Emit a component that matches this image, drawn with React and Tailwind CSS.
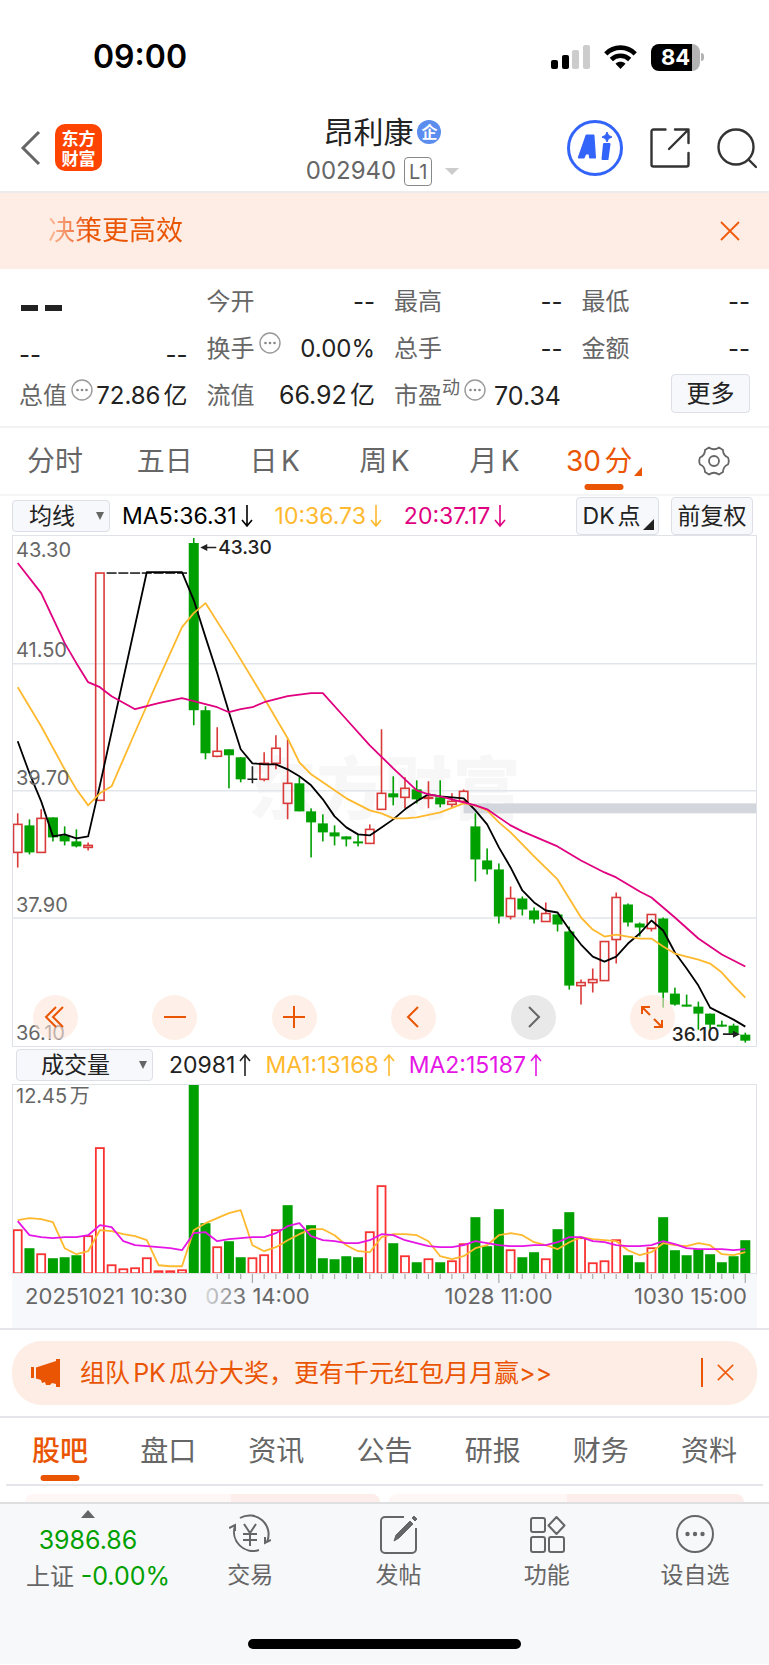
import { useState } from 'react';

const UP = '#d93a3a';
const DOWN = '#00a000';

// [kind, high, bodyTop, bodyBottom, low, volumeTop]
// u = up, d = down, x = flat, h = halted at the limit price
const bars = [
  ['u', 813, 824, 852, 867, 1229],
  ['d', 819, 825, 852, 854, 1248],
  ['u', 809, 818, 852, 852, 1253],
  ['d', 817, 817, 837, 841, 1258],
  ['d', 826, 835, 841, 845, 1257],
  ['d', 829, 841, 846, 847, 1255],
  ['u', 842, 845, 847, 850, 1235],
  ['u', 573, 573, 800, 800, 1147],
  ['h', 573, 573, 573, 573, 1264],
  ['h', 573, 573, 573, 573, 1268],
  ['h', 573, 573, 573, 573, 1267],
  ['h', 573, 573, 573, 573, 1257],
  ['h', 573, 573, 573, 573, 1270],
  ['h', 573, 573, 573, 573, 1270],
  ['h', 573, 573, 573, 573, 1269],
  ['d', 538, 543, 710, 725, 1084],
  ['d', 706, 710, 753, 759, 1223],
  ['u', 727, 751, 756, 757, 1246],
  ['d', 749, 749, 755, 788, 1241],
  ['d', 757, 757, 779, 782, 1257],
  ['x', 766, 779, 779, 783, 1257],
  ['u', 752, 763, 779, 781, 1254],
  ['u', 735, 748, 763, 769, 1229],
  ['u', 739, 783, 803, 819, 1205],
  ['d', 777, 783, 811, 811, 1229],
  ['d', 808, 811, 822, 857, 1225],
  ['d', 814, 823, 832, 841, 1258],
  ['d', 825, 832, 836, 845, 1259],
  ['d', 836, 836, 839, 846, 1256],
  ['d', 834, 841, 843, 846, 1257],
  ['u', 824, 829, 843, 843, 1231],
  ['u', 729, 793, 809, 809, 1185],
  ['d', 776, 793, 797, 805, 1243],
  ['u', 777, 788, 797, 808, 1255],
  ['d', 780, 789, 799, 803, 1262],
  ['u', 781, 797, 798, 808, 1258],
  ['d', 780, 797, 804, 807, 1262],
  ['u', 793, 801, 804, 807, 1260],
  ['u', 789, 791, 801, 801, 1243],
  ['d', 813, 826, 859, 881, 1217],
  ['d', 848, 860, 869, 874, 1246],
  ['d', 863, 869, 916, 923, 1209],
  ['u', 886, 898, 916, 919, 1249],
  ['d', 896, 898, 909, 915, 1257],
  ['d', 907, 910, 919, 923, 1252],
  ['u', 902, 913, 921, 921, 1258],
  ['d', 914, 914, 924, 931, 1229],
  ['d', 926, 931, 985, 989, 1212],
  ['u', 979, 982, 985, 1004, 1237],
  ['u', 968, 979, 982, 992, 1262],
  ['u', 941, 941, 980, 980, 1260],
  ['u', 892, 897, 939, 963, 1239],
  ['d', 903, 904, 922, 926, 1255],
  ['d', 922, 923, 927, 936, 1262],
  ['u', 914, 914, 928, 931, 1247],
  ['d', 917, 918, 992, 1007, 1217],
  ['d', 987, 993, 1004, 1005, 1250],
  ['d', 994, 1004, 1005, 1006, 1255],
  ['d', 1001, 1006, 1013, 1029, 1249],
  ['d', 1013, 1013, 1024, 1028, 1254],
  ['d', 1020, 1024, 1025, 1026, 1262],
  ['d', 1023, 1025, 1033, 1033, 1256],
  ['d', 1032, 1034, 1040, 1042, 1240],
];

const ma5 = [[0, 741], [1, 773], [2, 801], [3, 836], [4, 834], [5, 838], [6, 836], [7, 785], [11, 572], [14, 572], [15, 600], [16, 637], [17, 673], [18, 712], [19, 749], [20, 763], [21, 764], [22, 764], [23, 769], [24, 776], [25, 785], [26, 799], [27, 816], [28, 827], [29, 834], [30, 835], [31, 827], [32, 819], [33, 809], [34, 801], [35, 794], [36, 796], [37, 797], [38, 798], [39, 810], [40, 824], [41, 847], [42, 867], [43, 890], [44, 902], [45, 910], [46, 912], [47, 929], [48, 944], [49, 956], [50, 961], [51, 956], [52, 943], [53, 933], [54, 920], [55, 930], [56, 952], [57, 968], [58, 985], [59, 1007], [60, 1013], [61, 1019], [62, 1026]];
const ma10 = [[0, 687], [2, 726], [4, 769], [5, 789], [6, 805], [7, 793], [8, 786], [10, 732], [12, 679], [14, 627], [15, 613], [16, 603], [18, 640], [21, 698], [22, 718], [23, 738], [24, 762], [25, 774], [26, 782], [28, 798], [30, 810], [31, 813], [32, 818], [33, 818], [34, 817], [36, 812], [38, 803], [39, 805], [40, 810], [41, 822], [42, 832], [44, 856], [46, 879], [48, 917], [49, 929], [50, 936], [51, 934], [52, 936], [53, 938], [54, 938], [55, 946], [56, 953], [57, 956], [58, 959], [59, 963], [60, 972], [61, 985], [62, 997]];
const ma20 = [[0, 563], [2, 593], [3, 618], [4, 643], [5, 663], [6, 682], [7, 687], [8, 696], [10, 709], [12, 703], [14, 698], [15, 701], [16, 704], [17, 707], [18, 712], [19, 709], [20, 707], [21, 702], [22, 699], [23, 696], [25, 693], [26, 693], [28, 719], [30, 745], [32, 768], [34, 790], [35, 794], [36, 796], [37, 799], [38, 802], [39, 805], [40, 809], [41, 817], [42, 825], [43, 831], [44, 836], [46, 846], [48, 860], [50, 872], [51, 877], [53, 891], [54, 897], [56, 917], [58, 938], [60, 954], [61, 960], [62, 966]];
const volMa1 = [1220, 1218, 1219, 1222, 1248, 1254, 1251, 1230, 1231, 1234, 1236, 1240, 1265, 1266, 1266, 1230, 1223, 1218, 1213, 1210, 1245, 1251, 1247, 1240, 1234, 1229, 1229, 1235, 1245, 1251, 1252, 1237, 1234, 1234, 1235, 1241, 1256, 1259, 1256, 1248, 1245, 1235, 1233, 1235, 1242, 1245, 1249, 1242, 1237, 1239, 1240, 1241, 1250, 1255, 1252, 1243, 1245, 1246, 1243, 1245, 1254, 1255, 1252].map((y, i) => [i, y]);
const volMa2 = [1221, 1235, 1237, 1238, 1237, 1237, 1235, 1225, 1227, 1241, 1245, 1246, 1247, 1248, 1250, 1233, 1232, 1241, 1239, 1238, 1237, 1237, 1233, 1226, 1223, 1236, 1240, 1241, 1243, 1243, 1240, 1234, 1235, 1240, 1243, 1246, 1247, 1247, 1245, 1241, 1243, 1245, 1246, 1246, 1245, 1245, 1242, 1237, 1237, 1241, 1242, 1245, 1246, 1246, 1245, 1241, 1244, 1248, 1249, 1249, 1249, 1250, 1249].map((y, i) => [i, y]);

const barX = (i) => 5.7 + i * 11.72;
const toPoints = (data) => data.map(([i, y]) => `${barX(i)},${y}`).join(' ');

function Candle({ index, bar }) {
  const [kind, high, top, bottom, low] = bar;
  const x = barX(index);
  if (kind === 'h') {
    return <path d={`M${x - 5} ${top}h10`} stroke="#222" strokeWidth="1.6" />;
  }
  if (kind === 'x') {
    return <path d={`M${x - 5} ${top}h10M${x} ${high}V${low}`} stroke="#222" strokeWidth="1.6" />;
  }
  if (kind === 'd') {
    return (
      <g fill={DOWN}>
        <rect x={x - 5} y={top} width="10" height={Math.max(bottom - top, 2)} />
        <rect x={x - 0.8} y={high} width="1.6" height={low - high} />
      </g>
    );
  }
  return (
    <g stroke={UP} strokeWidth="1.6" fill="none">
      <rect x={x - 4.2} y={top} width="8.4" height={bottom - top} />
      <path d={`M${x} ${high}V${top}M${x} ${bottom}V${low}`} />
    </g>
  );
}

function PriceChart() {
  return (
    <svg viewBox="0 535 744 511" className="block h-auto w-full" fontFamily="Inter, 'Noto Sans CJK SC', sans-serif">
      <text x="236" y="814" fontSize="68" fontWeight="900" fill="#f7f7f7">东方财富</text>
      <path d="M0 663.5h744M0 790.5h744M0 917.5h744" stroke="#e1e5ec" strokeWidth="1.5" />
      <rect x="451" y="803" width="293" height="10" fill="#d3d6dc" />
      {bars.map((bar, i) => <Candle key={i} index={i} bar={bar} />)}
      <g fill="none" strokeWidth="1.8" strokeLinejoin="round">
        <polyline points={toPoints(ma5)} stroke="#000" />
        <polyline points={toPoints(ma10)} stroke="#ffb92e" />
        <polyline points={toPoints(ma20)} stroke="#e0007f" />
      </g>
      <g fontSize="20" fill="#666">
        <text x="4" y="557">43.30</text>
        <text x="4" y="657">41.50</text>
        <text x="4" y="785">39.70</text>
        <text x="4" y="912">37.90</text>
        <text x="4" y="1039">36.10</text>
      </g>
      <g fontSize="19" fontWeight="500" fill="#222">
        <text x="206" y="554">43.30</text>
        <text x="659" y="1040">36.10</text>
      </g>
      <path d="M204 547.500h-10M710 1033.500h10" stroke="#222" strokeWidth="1.6" />
      <path d="M188 547.500l7-3.500v7zM727 1033.500l-7-3.500v7z" fill="#222" />
    </svg>
  );
}

function VolumeChart() {
  return (
    <svg viewBox="0 1084 744 190" className="block h-auto w-full" fontFamily="Inter, 'Noto Sans CJK SC', sans-serif">
      <text x="4" y="1103" fontSize="20" fill="#666">12.45万</text>
      {bars.map(([kind, , , , , top], i) => {
        // bar 23 closed below the previous bar, so its volume counts as selling
        const down = kind === 'd' || i === 23;
        return down ? (
          <rect key={i} x={barX(i) - 5} y={top} width="10" height={1274 - top} fill={DOWN} />
        ) : (
          <rect key={i} x={barX(i) - 4} y={top + 1} width="8" height={1272 - top} fill="none" stroke="#fa3232" strokeWidth="1.8" />
        );
      })}
      <g fill="none" strokeWidth="1.8" strokeLinejoin="round">
        <polyline points={toPoints(volMa1)} stroke="#ffb92e" />
        <polyline points={toPoints(volMa2)} stroke="#e516e5" />
      </g>
    </svg>
  );
}

function TimeAxis() {
  const ticks = bars.map((_, i) => i).filter((i) => i > 16);
  return (
    <svg viewBox="0 0 744 54" className="block h-auto w-full bg-[#f7f8fb]" fontFamily="Inter, sans-serif">
      <defs>
        <linearGradient id="fade" x1="0" x2="1" y1="0" y2="0">
          <stop offset="0" stopColor="#d8d8da" />
          <stop offset="0.4" stopColor="#666" />
        </linearGradient>
      </defs>
      {ticks.map((i) => (
        <path key={i} d={`M${barX(i)} 0v${(i - 20) % 21 === 0 ? 9 : 5}`} stroke="#aaa" strokeWidth="1.2" />
      ))}
      <g fontSize="22" fill="#666">
        <text x="13" y="30">20251021 10:30</text>
        <text x="193" y="30" fill="url(#fade)">023 14:00</text>
        <text x="540" y="30" textAnchor="end">1028 11:00</text>
        <text x="734" y="30" textAnchor="end">1030 15:00</text>
      </g>
    </svg>
  );
}

function MoreDots() {
  return (
    <svg viewBox="0 0 22 22" className="mb-3 ml-1 h-[22px] w-[22px] shrink-0">
      <circle cx="11" cy="11" r="10" fill="none" stroke="#999" strokeWidth="1.4" />
      <g fill="#888">
        <circle cx="6.500" cy="11" r="1.300" />
        <circle cx="11" cy="11" r="1.300" />
        <circle cx="15.500" cy="11" r="1.300" />
      </g>
    </svg>
  );
}

function Arrow({ up = false }) {
  return (
    <svg viewBox="0 0 12 24" className="h-6 w-3" fill="none" stroke="currentColor" strokeWidth="1.6">
      {up ? <path d="M6 23V2M1 8l5-6 5 6" /> : <path d="M6 1v21M1 16l5 6 5-6" />}
    </svg>
  );
}

function Close({ className }) {
  return (
    <svg viewBox="0 0 20 20" className={className} fill="none" stroke="#f05a0a" strokeWidth="1.8">
      <path d="M1 1l18 18M19 1L1 19" />
    </svg>
  );
}

function Picker({ label, options, className, triangle }) {
  return (
    <div className="relative">
      <select aria-label={label} className={`block h-8 appearance-none rounded border border-[#dcdfe6] bg-[#f7f8fb] text-[23px] leading-7 text-[#222] ${className}`}>
        {options.map((option) => <option key={option}>{option}</option>)}
      </select>
      <svg viewBox="0 0 8 8" className={`pointer-events-none absolute top-3 h-2 w-2 ${triangle}`}>
        <path d="M0 0h8L4 8z" fill="#666" />
      </svg>
    </div>
  );
}

function Quote({ label, value, dots = false }) {
  return (
    <div className="flex items-center">
      <span className="text-[#666]">{label}</span>
      {dots && <MoreDots />}
      <span className="ml-auto">{value}</span>
    </div>
  );
}

function StatusBar() {
  return (
    <div className="flex h-[114px] items-center justify-between pr-[65px] pl-[93px]">
      <span className="text-[32px] leading-10 font-semibold text-black">09:00</span>
      <div className="flex items-center gap-[14px]">
        <svg viewBox="0 0 39 24" className="h-6 w-[39px]">
          <rect x="0" y="15" width="7" height="9" rx="2" />
          <rect x="11" y="10" width="7" height="14" rx="2" />
          <rect x="21" y="5" width="7" height="19" rx="2" fill="#ccc" />
          <rect x="32" y="0" width="7" height="24" rx="2" fill="#ccc" />
        </svg>
        <svg viewBox="0 0 33 24" className="h-6 w-[33px]" fill="none" stroke="#000" strokeWidth="4.600">
          <path d="M1.800 8.800C10 .5 23 .5 31.200 8.800" />
          <path d="M7.300 14.500c5.300-5 13.100-5 18.400 0" />
          <path d="M16.500 24l-5-5.200c3-2.600 7-2.600 10 0z" fill="#000" stroke="none" />
        </svg>
        <div className="flex items-center gap-px">
          <span className="flex h-[27px] w-[49px] items-center justify-center rounded-lg bg-linear-to-r from-black from-84% to-[#b3b3b3] to-84% text-[22px] leading-6 font-bold text-white">84</span>
          <span className="h-2 w-[3px] rounded-r-full bg-[#b3b3b3]" />
        </div>
      </div>
    </div>
  );
}

function Header() {
  return (
    <header className="grid h-[79px] grid-cols-[1fr_auto_1fr] items-start border-b-2 border-[#ececec] pr-3 pl-2">
      <div className="flex items-center gap-[14px] pt-[10px] pl-3">
        <button aria-label="返回">
          <svg viewBox="0 0 21 36" className="h-9 w-[21px]" fill="none" stroke="#666" strokeWidth="3">
            <path d="M19 2L3 18l16 16" />
          </svg>
        </button>
        <div className="flex h-[47px] w-[47px] items-center justify-center rounded-[10px] bg-[#ff4400] text-center font-['Noto_Sans_CJK_SC'] text-[17px] leading-[20px] font-bold text-white">
          <span className="w-[34px]">东方财富</span>
        </div>
      </div>
      <div className="flex flex-col items-center">
        <h1 className="flex items-center gap-1 text-[30px] leading-9 text-[#222]">
          昂利康
          <span className="flex h-6 w-6 items-center justify-center rounded-full bg-[#5b8def] text-base leading-5 font-bold text-white">企</span>
        </h1>
        <div className="flex h-[42px] items-center text-[24px] leading-8 text-[#666]">
          002940
          <span className="mt-px ml-2 flex h-[29px] w-7 items-center justify-center rounded border-[1px] border-[#888] text-xl">L1</span>
          <button aria-label="切换" className="ml-[13px]">
            <svg viewBox="0 0 14 7" className="h-[7px] w-[14px]"><path d="M0 0h14L7 7z" fill="#ccc" /></svg>
          </button>
        </div>
      </div>
      <div className="flex items-center justify-end gap-[27px] pt-[6px]">
        <button aria-label="Ai">
          <svg viewBox="0 0 56 56" className="h-14 w-14">
            <circle cx="28" cy="28" r="26.500" fill="#fff" stroke="#3364fa" strokeWidth="3" />
            <g fill="#3364fa" stroke="#3364fa" strokeWidth="2" strokeLinejoin="round">
              <path fillRule="evenodd" d="M19.500 15.500h7L28 37.500h-5l-.4-4h-4.200l-1.600 4h-5zM19.800 29h2.700l-.3-6z" />
              <path d="M37 24h5.500L40.500 39H35.500z" />
            </g>
            <path d="M40 12l1.500 3.300L45 17l-3.500 1.700L40 22l-1.500-3.300L35 17l3.500-1.700z" fill="#3364fa" stroke="#3364fa" />
          </svg>
        </button>
        <button aria-label="分享">
          <svg viewBox="0 0 40 40" className="h-10 w-10" fill="none" stroke="#333" strokeWidth="2.400" strokeLinecap="round" strokeLinejoin="round">
            <path d="M15.500 1.500H3.500a2 2 0 0 0-2 2v33a2 2 0 0 0 2 2h33a2 2 0 0 0 2-2V25M25 1.500h13.500V15M38 2L19 21" />
          </svg>
        </button>
        <button aria-label="搜索">
          <svg viewBox="0 0 40 42" className="h-[42px] w-10" fill="none" stroke="#333" strokeWidth="2.400" strokeLinecap="round">
            <circle cx="19" cy="20" r="17.500" />
            <path d="M31.500 32.500l7.500 7.500" />
          </svg>
        </button>
      </div>
    </header>
  );
}

function QuotePanel() {
  return (
    <section className="grid grid-cols-4 grid-rows-[47px_47px_47px] gap-x-[19px] border-b-2 border-[#f3f3f3] px-[19px] pt-[9px] pb-[7px] text-2xl leading-8 text-[#222]">
      <div className="flex items-center gap-[7px] pt-3 pl-[2px] text-[#222]" aria-label="--">
        <span className="h-[6px] w-[17px] bg-[#222]" />
        <span className="h-[6px] w-[17px] bg-[#222]" />
      </div>
      <Quote label="今开" value="--" />
      <Quote label="最高" value="--" />
      <Quote label="最低" value="--" />
      <div className="flex items-center justify-between pt-3"><span>--</span><span>--</span></div>
      <Quote label="换手" value="0.00%" dots />
      <Quote label="总手" value="--" />
      <Quote label="金额" value="--" />
      <Quote label="总值" value="72.86亿" dots />
      <Quote label="流值" value={<span className="text-[25px]">66.92亿</span>} />
      <div className="flex items-center">
        <span className="text-[#666]">市盈</span>
        <span className="mb-4 text-lg leading-6 text-[#666]">动</span>
        <MoreDots />
        <span className="ml-2 text-[25px]">70.34</span>
      </div>
      <button className="mt-[2px] h-[39px] w-[79px] self-start justify-self-end rounded border border-[#dcdfe6] bg-[#f7f8fb]">更多</button>
    </section>
  );
}

const periods = ['分时', '五日', '日K', '周K', '月K', '30分'];

function PeriodTabs() {
  const [active, setActive] = useState('30分');
  return (
    <nav className="grid h-[68px] grid-cols-7 border-b-2 border-[#f5f5f5] text-[28px] leading-9 text-[#666]">
      {periods.map((name) => (
        <button key={name} onClick={() => setActive(name)} className={`relative flex items-center justify-center gap-[2px] whitespace-nowrap ${active === name ? 'text-[#ea5504]' : ''}`}>
          {name}
          {name === '30分' && (
            <svg viewBox="0 0 8 9" className="mt-5 h-[9px] w-2"><path d="M8 0v9H0z" fill="#ea5504" /></svg>
          )}
          {active === name && <span className="absolute bottom-1 left-1/2 h-[6px] w-[39px] -translate-x-1/2 rounded-full bg-[#ea5504]" />}
        </button>
      ))}
      <button aria-label="设置" className="flex items-center justify-center">
        <svg viewBox="0 0 32 30" className="h-[30px] w-8" fill="none" stroke="#666" strokeWidth="1.800" strokeLinejoin="round">
          <path d="M11 1.500Q16 5 21 1.500L25 4Q25 9.500 30 11.500Q31.500 15 30 18.500Q25 20.500 25 26L21 28.500Q16 25 11 28.500L7 26Q7 20.500 2 18.500Q.5 15 2 11.500Q7 9.500 7 4Z" />
          <circle cx="16" cy="15" r="5" />
        </svg>
      </button>
    </nav>
  );
}

function RoundButton({ label, grey = false, children }) {
  return (
    <button aria-label={label} className={`flex h-[45px] w-[45px] items-center justify-center rounded-full ${grey ? 'bg-[#e9e9e9]' : 'bg-[#fee5d9]/60'}`}>
      <svg viewBox="0 0 24 24" className="h-6 w-6" fill="none" stroke={grey ? '#666' : '#ea5504'} strokeWidth="2">{children}</svg>
    </button>
  );
}

function ChartSection() {
  return (
    <section>
      <div className="flex h-[39px] items-center px-3 text-[23px] leading-7">
        <Picker label="主图指标" options={['均线', 'BOLL']} className="w-[98px] pl-4" triangle="right-[6px]" />
        <span className="ml-3 flex items-center gap-1 text-black">MA5:36.31 <Arrow /></span>
        <span className="ml-[22px] flex items-center gap-1 text-[#ffb92e]">10:36.73 <Arrow /></span>
        <span className="ml-[22px] flex items-center gap-1 text-[#e0007f]">20:37.17 <Arrow /></span>
        <button className="relative ml-auto h-[38px] w-[83px] rounded border border-[#dcdfe6] bg-[#f7f8fb] pr-3 whitespace-nowrap text-[#222]">
          DK点
          <svg viewBox="0 0 11 11" className="absolute right-1 bottom-1 h-[11px] w-[11px]"><path d="M11 0v11H0z" fill="#222" /></svg>
        </button>
        <button className="mr-1 ml-3 h-[38px] w-[82px] rounded border border-[#dcdfe6] bg-[#f7f8fb] text-[#222]">前复权</button>
      </div>

      <div className="relative mx-3 outline-1 -outline-offset-1 outline-[#dfe2e7]">
        <PriceChart />
        <div className="absolute right-[82px] bottom-[7px] left-[21px] flex justify-between">
          <RoundButton label="最早"><path d="M12 2L2 12l10 10M19 2L9 12l10 10" /></RoundButton>
          <RoundButton label="缩小"><path d="M1 12h22" /></RoundButton>
          <RoundButton label="放大"><path d="M1 12h22M12 1v22" /></RoundButton>
          <RoundButton label="向前"><path d="M16 2L6 12l10 10" /></RoundButton>
          <RoundButton label="向后" grey><path d="M8 2l10 10L8 22" /></RoundButton>
          <RoundButton label="全屏">
            <path d="M2 9V2h8M2 2l8 8M22 15v7h-8M22 22l-8-8" />
          </RoundButton>
        </div>
      </div>

      <div className="flex h-[37px] items-center px-4 text-[23px] leading-7">
        <Picker label="副图指标" options={['成交量', 'MACD']} className="w-[137px] pl-6" triangle="right-[6px]" />
        <span className="ml-4 flex items-center gap-1 text-[#222]">20981 <Arrow up /></span>
        <span className="ml-[14px] flex items-center gap-1 text-[#ffb92e]">MA1:13168 <Arrow up /></span>
        <span className="ml-[14px] flex items-center gap-1 text-[#e516e5]">MA2:15187 <Arrow up /></span>
      </div>

      <div className="mx-3">
        <div className="outline-1 -outline-offset-1 outline-[#dfe2e7]"><VolumeChart /></div>
        <TimeAxis />
      </div>
    </section>
  );
}

function Promo() {
  return (
    <section className="border-y-2 border-[#e4e6eb] px-3 py-[11px]">
      <div className="flex h-[64px] items-center rounded-[30px] bg-[#fdede4] pr-[23px] pl-[19px] text-[#ea5504]">
        <svg viewBox="0 0 31 28" className="h-7 w-[31px]" fill="#ea5504">
          <path d="M0 8h3v11H0zM5 8.500L25 2V0h4v28h-4v-3l-4-1-2 2h-4l-1-3-3 1-1-3-5-1.500z" />
        </svg>
        <a href="#pk" className="ml-[18px] text-[25px] leading-8">组队PK瓜分大奖，更有千元红包月月赢&gt;&gt;</a>
        <span className="ml-auto h-[29px] w-[2px] bg-[#ea5504]" />
        <button aria-label="关闭" className="ml-[14px]"><Close className="h-[17px] w-[17px]" /></button>
      </div>
    </section>
  );
}

const sections = ['股吧', '盘口', '资讯', '公告', '研报', '财务', '资料'];

function SectionTabs() {
  const [active, setActive] = useState('股吧');
  return (
    <nav className="mx-[6px] grid h-[68px] grid-cols-7 border-b-2 border-[#e4e6eb] text-[28px] leading-9 text-[#666]">
      {sections.map((name) => (
        <button key={name} onClick={() => setActive(name)} className={`relative ${active === name ? 'font-medium text-[#ea5504]' : ''}`}>
          {name}
          {active === name && <span className="absolute bottom-[3px] left-1/2 h-[6px] w-[39px] -translate-x-1/2 rounded-full bg-[#ea5504]" />}
        </button>
      ))}
    </nav>
  );
}

function BottomItem({ label, children }) {
  return (
    <button className="flex flex-col items-center gap-1 pt-[9px] text-[23px] leading-8">
      <svg viewBox="0 0 42 42" className="h-[42px] w-[42px]" fill="none" stroke="#666" strokeWidth="2">{children}</svg>
      {label}
    </button>
  );
}

function BottomBar() {
  return (
    <footer className="h-[162px] border-t-2 border-[#dedfe1] bg-[#f7f8fa] text-[#666]">
      <div className="grid grid-cols-[176px_repeat(4,1fr)]">
        <a href="#index" className="flex flex-col items-center pt-[6px] text-2xl leading-9">
          <svg viewBox="0 0 14 8" className="h-2 w-[14px]"><path d="M7 0l7 8H0z" fill="#666" /></svg>
          <span className="mt-1 text-[25px] text-[#00a000]">3986.86</span>
          <span className="pl-5 whitespace-nowrap">上证 <span className="text-[25px] text-[#00a000]">-0.00%</span></span>
        </a>
        <BottomItem label="交易">
          <path d="M11 5a19 19 0 0 1 27 24M30 37A19 19 0 0 1 6 13M0 15l6-3v6M42 27l-6 3v-6" />
          <path d="M15 11l6 9 6-9M21 20v13M14 21h14M14 27h14" />
        </BottomItem>
        <BottomItem label="发帖">
          <path d="M27 4H8a4 4 0 0 0-4 4v28a4 4 0 0 0 4 4h27a4 4 0 0 0 4-4V15" />
          <path d="M17 28l2-6L33 8l3 3-14 14z" fill="#666" strokeWidth="1" />
          <path d="M35 5l2-2 3 3-2 2z" fill="#666" strokeWidth="1" />
        </BottomItem>
        <BottomItem label="功能">
          <rect x="5" y="5" width="14" height="14" rx="2" />
          <rect x="5" y="24" width="14" height="15" rx="2" />
          <rect x="23" y="24" width="15" height="15" rx="2" />
          <path d="M30.500 4l8 8.500-8 8.500-8-8.500z" strokeLinejoin="round" />
        </BottomItem>
        <BottomItem label="设自选">
          <circle cx="21" cy="21" r="18" />
          <g fill="#666" stroke="none">
            <circle cx="13.500" cy="21" r="2.200" />
            <circle cx="21" cy="21" r="2.200" />
            <circle cx="28.500" cy="21" r="2.200" />
          </g>
        </BottomItem>
      </div>
      <div className="mx-auto mt-[44px] h-[10px] w-[273px] rounded-full bg-black" />
    </footer>
  );
}

export default function App() {
  return (
    <main className="bg-white font-['Inter','Noto_Sans_CJK_SC',sans-serif] [text-autospace:normal]" lang="zh-CN">
      <StatusBar />
      <Header />
      <div className="flex h-[76px] items-center justify-between bg-[#fdede4] pr-[29px] pl-12">
        <span className="bg-linear-to-r from-[#f9bb98] to-[#ea5504] to-30% bg-clip-text text-[27px] leading-9 text-transparent">决策更高效</span>
        <button aria-label="关闭"><Close className="h-5 w-5" /></button>
      </div>
      <QuotePanel />
      <PeriodTabs />
      <ChartSection />
      <Promo />
      <SectionTabs />
      <div className="flex h-4 gap-[9px] px-[25px] pt-2">
        <div className="flex-1 rounded-t-[14px] bg-linear-to-r from-[#fff7f5] from-58% to-[#fdeeeb] to-58%" />
        <div className="flex-1 rounded-t-[14px] bg-linear-to-r from-[#fff7f5] from-50% to-[#fdeeeb] to-50%" />
      </div>
      <BottomBar />
    </main>
  );
}
